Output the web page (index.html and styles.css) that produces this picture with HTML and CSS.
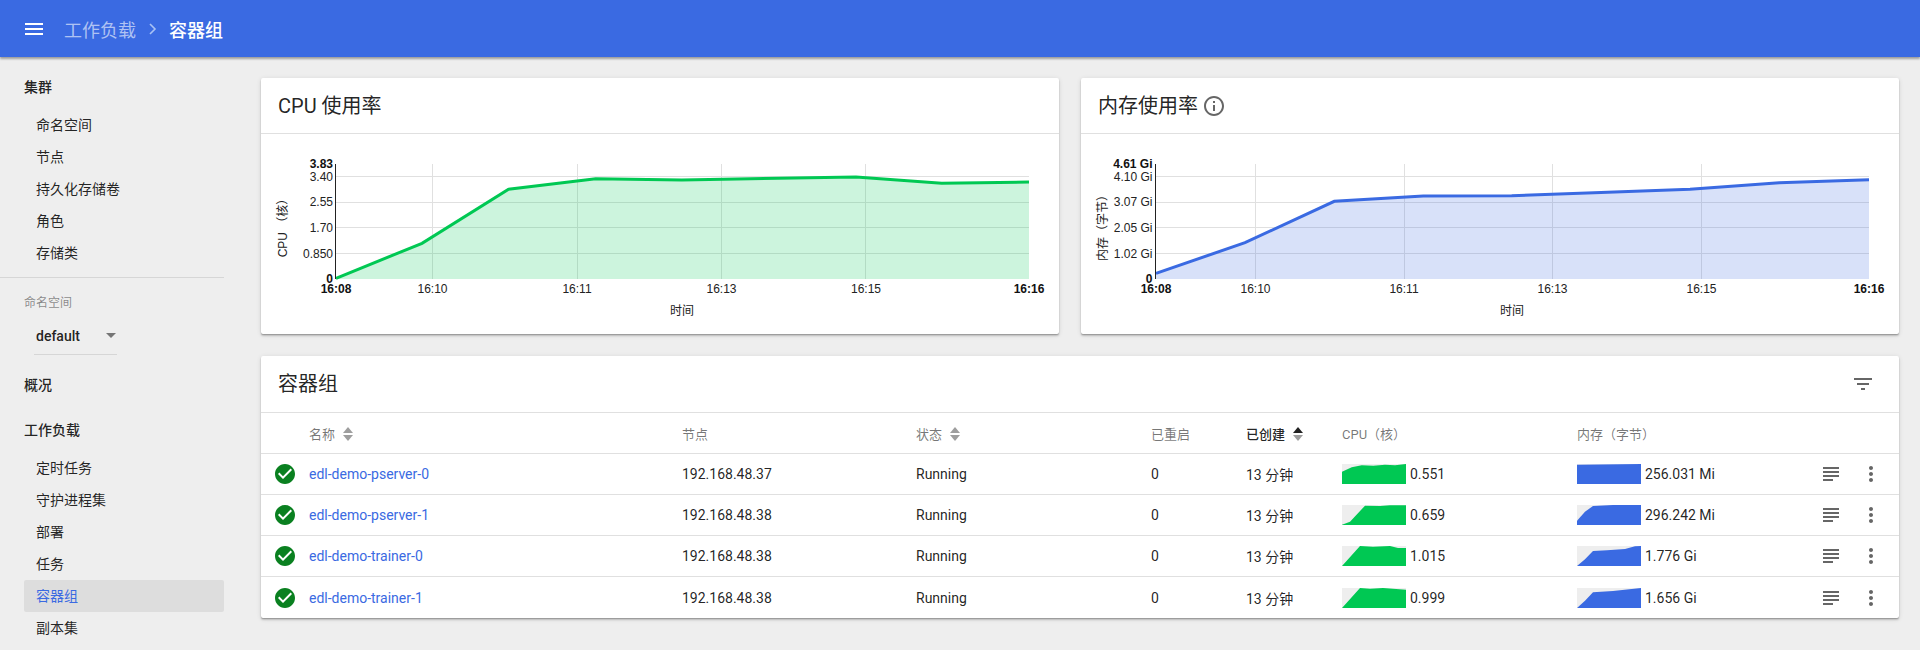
FILE: index.html
```html
<!DOCTYPE html>
<html lang="zh">
<head>
<meta charset="utf-8">
<title>容器组</title>
<link rel="stylesheet" href="styles.css">
</head>
<body>
<header class="toolbar">
  <svg class="menu-icon" width="18" height="12" viewBox="0 0 18 12"><path d="M0 0h18v2H0zM0 5h18v2H0zM0 10h18v2H0z" fill="#fff"/></svg>
  <span class="crumb">工作负载</span>
  <svg class="crumb-sep" width="8" height="12" viewBox="0 0 8 12"><path d="M1 1l5 5-5 5" fill="none" stroke="#a9c2f4" stroke-width="1.6"/></svg>
  <span class="crumb-current">容器组</span>
</header>
<div class="layout">
  <aside class="sidebar">
    <div class="nav-title">集群</div>
    <ul class="nav-list">
      <li class="nav-item">命名空间</li>
      <li class="nav-item">节点</li>
      <li class="nav-item">持久化存储卷</li>
      <li class="nav-item">角色</li>
      <li class="nav-item">存储类</li>
    </ul>
    <div class="nav-divider"></div>
    <div class="ns-label">命名空间</div>
    <div class="ns-select"><span>default</span><i class="ns-arrow"></i></div>
    <div class="nav-title nav-title-solo">概况</div>
    <div class="nav-title nav-title-next">工作负载</div>
    <ul class="nav-list">
      <li class="nav-item">定时任务</li>
      <li class="nav-item">守护进程集</li>
      <li class="nav-item">部署</li>
      <li class="nav-item">任务</li>
      <li class="nav-item nav-item-active">容器组</li>
      <li class="nav-item">副本集</li>
    </ul>
  </aside>
  <main class="content">
    <section class="card">
      <div class="card-head"><h2 class="card-title">CPU 使用率</h2></div>
      <svg class="chart" width="798" height="200" viewBox="261 134 798 200">
        <g class="grid">
          <path d="M336 176.5H1029M336 202.5H1029M336 227.5H1029M336 253.5H1029"/>
          <path d="M432.5 164V279M577.5 164V279M721.5 164V279M865.5 164V279"/>
        </g>
        <polygon class="area-green" points="336,279 336,278.3 422,243.3 508.6,189.3 595.7,178.7 681.8,180 856,177 941.7,183.3 1029,182 1029,279"/>
        <polyline class="line-green" points="336,278.3 422,243.3 508.6,189.3 595.7,178.7 681.8,180 856,177 941.7,183.3 1029,182"/>
        <path class="axis" d="M335.5 164V279"/>
        <g class="y-labels">
          <text class="strong" x="333" y="168">3.83</text>
          <text x="333" y="181">3.40</text>
          <text x="333" y="206">2.55</text>
          <text x="333" y="232">1.70</text>
          <text x="333" y="258">0.850</text>
          <text class="strong" x="333" y="283">0</text>
        </g>
        <g class="x-labels">
          <text class="strong" x="336" y="293">16:08</text>
          <text x="432.5" y="293">16:10</text>
          <text x="577" y="293">16:11</text>
          <text x="721.5" y="293">16:13</text>
          <text x="866" y="293">16:15</text>
          <text class="strong" x="1029" y="293">16:16</text>
          <text x="682" y="315">时间</text>
        </g>
        <text class="y-title" transform="translate(286.5 225) rotate(-90)">CPU （核）</text>
      </svg>
    </section>
    <section class="card">
      <div class="card-head">
        <h2 class="card-title">内存使用率</h2>
        <svg class="info-icon" width="24" height="24" viewBox="0 0 24 24"><path d="M11 17h2v-6h-2v6zm1-15C6.48 2 2 6.48 2 12s4.48 10 10 10 10-4.48 10-10S17.52 2 12 2zm0 18c-4.41 0-8-3.59-8-8s3.59-8 8-8 8 3.59 8 8-3.59 8-8 8zm-1-11h2V7h-2v2z"/></svg>
      </div>
      <svg class="chart" width="818" height="200" viewBox="1081 134 818 200">
        <g class="grid">
          <path d="M1156 176.5H1869M1156 202.5H1869M1156 227.5H1869M1156 253.5H1869"/>
          <path d="M1255.5 164V279M1404.5 164V279M1552.5 164V279M1701.5 164V279"/>
        </g>
        <polygon class="area-blue" points="1156,279 1156,273.3 1245,242.7 1334.3,201.3 1423.3,196 1511.7,195.7 1601,192.5 1690,189.3 1779.3,182.7 1869,179.7 1869,279"/>
        <polyline class="line-blue" points="1156,273.3 1245,242.7 1334.3,201.3 1423.3,196 1511.7,195.7 1601,192.5 1690,189.3 1779.3,182.7 1869,179.7"/>
        <path class="axis" d="M1155.5 164V279"/>
        <g class="y-labels">
          <text class="strong" x="1152.5" y="168">4.61 Gi</text>
          <text x="1152.5" y="181">4.10 Gi</text>
          <text x="1152.5" y="206">3.07 Gi</text>
          <text x="1152.5" y="232">2.05 Gi</text>
          <text x="1152.5" y="258">1.02 Gi</text>
          <text class="strong" x="1152.5" y="283">0</text>
        </g>
        <g class="x-labels">
          <text class="strong" x="1156" y="293">16:08</text>
          <text x="1255.5" y="293">16:10</text>
          <text x="1404" y="293">16:11</text>
          <text x="1552.5" y="293">16:13</text>
          <text x="1701.5" y="293">16:15</text>
          <text class="strong" x="1869" y="293">16:16</text>
          <text x="1512" y="315">时间</text>
        </g>
        <text class="y-title" transform="translate(1107 225) rotate(-90)">内存（字节）</text>
      </svg>
    </section>
    <section class="card card-wide">
      <div class="card-head card-head-table">
        <h2 class="card-title">容器组</h2>
        <svg class="filter-icon" width="24" height="24" viewBox="0 0 24 24"><path d="M10 18h4v-2h-4v2zM3 6v2h18V6H3zm3 7h12v-2H6v2z"/></svg>
      </div>
      <table class="pods">
        <colgroup>
          <col class="c-status"><col class="c-name"><col class="c-node"><col class="c-state"><col class="c-restart"><col class="c-created"><col class="c-cpu"><col class="c-mem"><col class="c-logs"><col class="c-more">
        </colgroup>
        <thead>
          <tr>
            <th></th>
            <th>名称<svg class="sort" width="10" height="14" viewBox="0 0 10 14"><path class="sort-up" d="M5 0l5 6H0z"/><path class="sort-down" d="M5 14l5-6H0z"/></svg></th>
            <th>节点</th>
            <th>状态<svg class="sort" width="10" height="14" viewBox="0 0 10 14"><path class="sort-up" d="M5 0l5 6H0z"/><path class="sort-down" d="M5 14l5-6H0z"/></svg></th>
            <th>已重启</th>
            <th class="th-active">已创建<svg class="sort sort-active" width="10" height="14" viewBox="0 0 10 14"><path class="sort-up" d="M5 0l5 6H0z"/><path class="sort-down" d="M5 14l5-6H0z"/></svg></th>
            <th>CPU（核）</th>
            <th>内存（字节）</th>
            <th></th>
            <th></th>
          </tr>
        </thead>
        <tbody>
          <tr>
            <td><svg class="ok-icon" width="24" height="24" viewBox="0 0 24 24"><path d="M12 2C6.48 2 2 6.48 2 12s4.48 10 10 10 10-4.48 10-10S17.52 2 12 2zm-2 15l-5-5 1.41-1.41L10 14.17l7.59-7.59L19 8l-9 9z"/></svg></td>
            <td><a class="pod-link" href="#">edl-demo-pserver-0</a></td>
            <td>192.168.48.37</td>
            <td>Running</td>
            <td>0</td>
            <td>13 分钟</td>
            <td><div class="metric"><svg class="spark" width="64" height="20" viewBox="0 0 64 20"><polygon class="spark-green" points="0,20 0,7.7 9.7,3.3 19.7,1.3 31.3,1.7 43,.7 53,1.3 64,0 64,20"/></svg>0.551</div></td>
            <td><div class="metric"><svg class="spark" width="64" height="20" viewBox="0 0 64 20"><polygon class="spark-blue" points="0,20 0,.7 64,0 64,20"/></svg>256.031 Mi</div></td>
            <td><svg class="row-icon" width="24" height="24" viewBox="0 0 24 24"><path d="M14 17H4v2h10v-2zm6-8H4v2h16V9zM4 15h16v-2H4v2zM4 5v2h16V5H4z"/></svg></td>
            <td><svg class="row-icon" width="24" height="24" viewBox="0 0 24 24"><path d="M12 8c1.1 0 2-.9 2-2s-.9-2-2-2-2 .9-2 2 .9 2 2 2zm0 2c-1.1 0-2 .9-2 2s.9 2 2 2 2-.9 2-2-.9-2-2-2zm0 6c-1.1 0-2 .9-2 2s.9 2 2 2 2-.9 2-2-.9-2-2-2z"/></svg></td>
          </tr>
          <tr>
            <td><svg class="ok-icon" width="24" height="24" viewBox="0 0 24 24"><path d="M12 2C6.48 2 2 6.48 2 12s4.48 10 10 10 10-4.48 10-10S17.52 2 12 2zm-2 15l-5-5 1.41-1.41L10 14.17l7.59-7.59L19 8l-9 9z"/></svg></td>
            <td><a class="pod-link" href="#">edl-demo-pserver-1</a></td>
            <td>192.168.48.38</td>
            <td>Running</td>
            <td>0</td>
            <td>13 分钟</td>
            <td><div class="metric"><svg class="spark" width="64" height="20" viewBox="0 0 64 20"><polygon class="spark-green" points="0,20 0,19.7 8,16.7 23,.7 38,1 48,.3 64,.3 64,20"/></svg>0.659</div></td>
            <td><div class="metric"><svg class="spark" width="64" height="20" viewBox="0 0 64 20"><polygon class="spark-blue" points="0,20 0,15.7 8,6.7 16,1 36,0 64,0 64,20"/></svg>296.242 Mi</div></td>
            <td><svg class="row-icon" width="24" height="24" viewBox="0 0 24 24"><path d="M14 17H4v2h10v-2zm6-8H4v2h16V9zM4 15h16v-2H4v2zM4 5v2h16V5H4z"/></svg></td>
            <td><svg class="row-icon" width="24" height="24" viewBox="0 0 24 24"><path d="M12 8c1.1 0 2-.9 2-2s-.9-2-2-2-2 .9-2 2 .9 2 2 2zm0 2c-1.1 0-2 .9-2 2s.9 2 2 2 2-.9 2-2-.9-2-2-2zm0 6c-1.1 0-2 .9-2 2s.9 2 2 2 2-.9 2-2-.9-2-2-2z"/></svg></td>
          </tr>
          <tr>
            <td><svg class="ok-icon" width="24" height="24" viewBox="0 0 24 24"><path d="M12 2C6.48 2 2 6.48 2 12s4.48 10 10 10 10-4.48 10-10S17.52 2 12 2zm-2 15l-5-5 1.41-1.41L10 14.17l7.59-7.59L19 8l-9 9z"/></svg></td>
            <td><a class="pod-link" href="#">edl-demo-trainer-0</a></td>
            <td>192.168.48.38</td>
            <td>Running</td>
            <td>0</td>
            <td>13 分钟</td>
            <td><div class="metric"><svg class="spark" width="64" height="20" viewBox="0 0 64 20"><polygon class="spark-green" points="0,20 18,0 31,.7 48,0 56,2 64,2 64,20"/></svg>1.015</div></td>
            <td><div class="metric"><svg class="spark" width="64" height="20" viewBox="0 0 64 20"><polygon class="spark-blue" points="0,20 8,13.3 16,5 30,4.3 48,3 58,.3 64,0 64,20"/></svg>1.776 Gi</div></td>
            <td><svg class="row-icon" width="24" height="24" viewBox="0 0 24 24"><path d="M14 17H4v2h10v-2zm6-8H4v2h16V9zM4 15h16v-2H4v2zM4 5v2h16V5H4z"/></svg></td>
            <td><svg class="row-icon" width="24" height="24" viewBox="0 0 24 24"><path d="M12 8c1.1 0 2-.9 2-2s-.9-2-2-2-2 .9-2 2 .9 2 2 2zm0 2c-1.1 0-2 .9-2 2s.9 2 2 2 2-.9 2-2-.9-2-2-2zm0 6c-1.1 0-2 .9-2 2s.9 2 2 2 2-.9 2-2-.9-2-2-2z"/></svg></td>
          </tr>
          <tr>
            <td><svg class="ok-icon" width="24" height="24" viewBox="0 0 24 24"><path d="M12 2C6.48 2 2 6.48 2 12s4.48 10 10 10 10-4.48 10-10S17.52 2 12 2zm-2 15l-5-5 1.41-1.41L10 14.17l7.59-7.59L19 8l-9 9z"/></svg></td>
            <td><a class="pod-link" href="#">edl-demo-trainer-1</a></td>
            <td>192.168.48.38</td>
            <td>Running</td>
            <td>0</td>
            <td>13 分钟</td>
            <td><div class="metric"><svg class="spark" width="64" height="20" viewBox="0 0 64 20"><polygon class="spark-green" points="0,20 18,0 28,.7 41,0 64,1.7 64,20"/></svg>0.999</div></td>
            <td><div class="metric"><svg class="spark" width="64" height="20" viewBox="0 0 64 20"><polygon class="spark-blue" points="0,20 8,12.7 16,4.3 36,3 64,0 64,20"/></svg>1.656 Gi</div></td>
            <td><svg class="row-icon" width="24" height="24" viewBox="0 0 24 24"><path d="M14 17H4v2h10v-2zm6-8H4v2h16V9zM4 15h16v-2H4v2zM4 5v2h16V5H4z"/></svg></td>
            <td><svg class="row-icon" width="24" height="24" viewBox="0 0 24 24"><path d="M12 8c1.1 0 2-.9 2-2s-.9-2-2-2-2 .9-2 2 .9 2 2 2zm0 2c-1.1 0-2 .9-2 2s.9 2 2 2 2-.9 2-2-.9-2-2-2zm0 6c-1.1 0-2 .9-2 2s.9 2 2 2 2-.9 2-2-.9-2-2-2z"/></svg></td>
          </tr>
        </tbody>
      </table>
    </section>
  </main>
</div>
</body>
</html>
```

FILE: styles.css
```css
* { box-sizing: border-box; }
html, body { margin: 0; height: 650px; overflow: hidden; }
body {
  background: #eee;
  color: #000000de;
  font-family: Roboto, "Noto Sans CJK SC", sans-serif;
  font-size: 14px;
}

/* toolbar */
.toolbar {
  position: relative;
  z-index: 2;
  display: flex;
  align-items: center;
  height: 57px;
  padding-left: 25px;
  background: #3a6ae2;
  box-shadow: 0 2px 2px rgba(0,0,0,.24), 0 1px 3px rgba(0,0,0,.2);
  font-size: 18px;
}
.menu-icon { margin-right: 21px; }
.crumb { color: #ffffff99; }
.crumb-sep { margin: 0 12px 0 13px; }
.crumb-current { color: #fff; font-weight: 500; }

/* layout */
.layout { display: flex; height: 593px; }
.sidebar { flex: 0 0 224px; padding-top: 14px; }
.content {
  flex: 1;
  display: grid;
  grid-template-columns: 798px 818px;
  grid-auto-rows: min-content;
  gap: 22px;
  padding: 21px 0 0 37px;
}

/* sidebar */
.nav-title {
  height: 32px;
  margin: 0 0 6px 24px;
  font-weight: 500;
  line-height: 32px;
}
.nav-title-solo { margin-bottom: 13px; }
.nav-list { margin: 0; padding: 0 0 0 24px; list-style: none; }
.nav-item {
  height: 32px;
  padding-left: 12px;
  border-radius: 2px;
  line-height: 32px;
}
.nav-item-active { background: #ddd; color: #3a6ae2; }
.nav-divider { height: 1px; margin-top: 8px; background: #d6d6d6; }
.ns-label {
  margin: 17px 0 0 24px;
  color: #00000073;
  font-size: 12px;
  line-height: 16px;
}
.ns-select {
  display: flex;
  align-items: center;
  justify-content: space-between;
  width: 83px;
  height: 35px;
  margin: 9px 0 14px 34px;
  padding: 0 1px 3px 2px;
  border-bottom: 1px solid #d6d6d6;
  font-weight: 500;
}
.ns-arrow {
  width: 0;
  height: 0;
  border-top: 5px solid #757575;
  border-left: 5px solid transparent;
  border-right: 5px solid transparent;
}

/* cards */
.card {
  background: #fff;
  border-radius: 2px;
  box-shadow: 0 2px 2px rgba(0,0,0,.14), 0 1px 5px rgba(0,0,0,.12), 0 1px 1px rgba(0,0,0,.2);
}
.card-wide { grid-column: 1 / -1; }
.card-head {
  display: flex;
  align-items: center;
  height: 56px;
  padding-left: 17px;
  border-bottom: 1px solid #e0e0e0;
}
.card-head-table { justify-content: space-between; height: 57px; padding-right: 24px; }
.card-title { margin: 0; font-size: 20px; font-weight: 400; line-height: 28px; }
.info-icon { margin-left: 4px; fill: #666; }
.filter-icon { fill: #666; }

/* charts */
.chart { display: block; font-family: "Liberation Sans", "Noto Sans CJK SC", sans-serif; font-size: 12px; fill: #222; }
.grid path { fill: none; stroke: #e0e0e0; stroke-width: 1; }
.axis { fill: none; stroke: #222; stroke-width: 1; }
.area-green { fill: #00c853; fill-opacity: .2; }
.area-blue { fill: #3a6ae2; fill-opacity: .2; }
.line-green, .line-blue { fill: none; stroke-width: 3; }
.line-green { stroke: #00c853; }
.line-blue { stroke: #3a6ae2; }
.y-labels text { text-anchor: end; }
.x-labels text { text-anchor: middle; }
.y-title { text-anchor: middle; font-size: 12px; }
.strong { font-weight: 700; fill: #111; }

/* table */
.pods { width: 100%; table-layout: fixed; border-collapse: separate; border-spacing: 0; }
.c-status { width: 48px; }
.c-name { width: 373px; }
.c-node { width: 234px; }
.c-state { width: 235px; }
.c-restart { width: 95px; }
.c-created { width: 96px; }
.c-cpu { width: 235px; }
.c-mem { width: 246px; }
.c-logs { width: 40px; }
.pods th, .pods td { height: 41px; padding: 0; text-align: left; }
.pods th {
  border-bottom: 1px solid #e0e0e0;
  color: #0000008a;
  font-size: 13px;
  font-weight: 400;
}
.pods .th-active { color: #000000de; font-weight: 500; }
.pods tbody tr:not(:last-child) td { border-bottom: 1px solid #e0e0e0; }
.pods td:first-child { padding-left: 12px; }
.sort { margin-left: 8px; vertical-align: -2px; }
.sort path { fill: #9e9e9e; }
.sort-active .sort-up { fill: #222; }
.ok-icon { display: block; fill: #0a8020; }
.pod-link { color: #3a6ae2; text-decoration: none; }
.metric { display: flex; align-items: center; gap: 4px; }
.spark { flex: none; background: #eee; }
.spark-green { fill: #00c853; }
.spark-blue { fill: #3a6ae2; }
.row-icon { display: block; margin-left: -4px; fill: #666; }
```
